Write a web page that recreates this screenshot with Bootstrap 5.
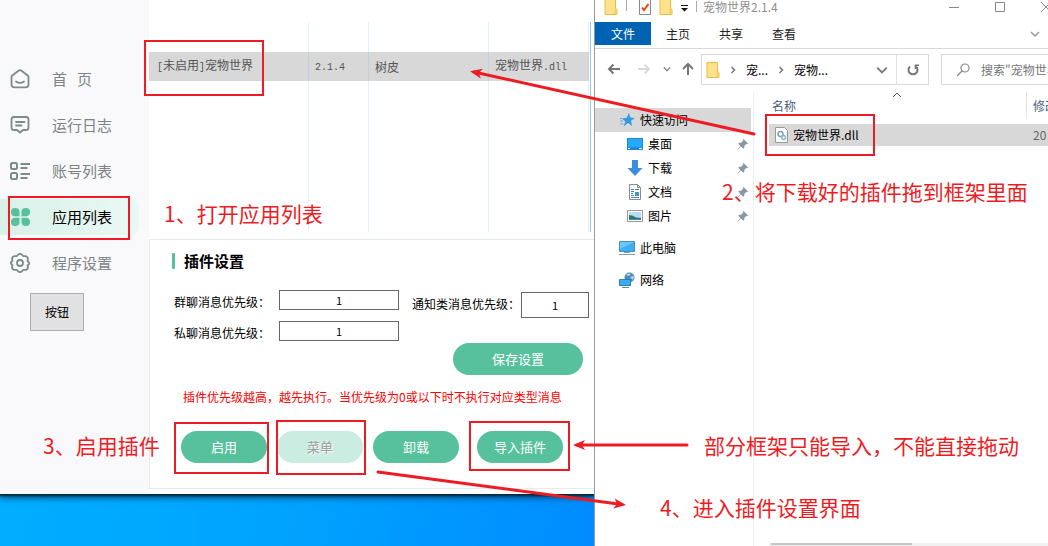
<!DOCTYPE html>
<html lang="zh-CN">
<head>
<meta charset="utf-8">
<meta name="viewport" content="width=device-width, initial-scale=1">
<title>插件安装步骤</title>
<link href="https://cdn.jsdelivr.net/npm/bootstrap@5.3.0/dist/css/bootstrap.min.css" rel="stylesheet">
<style>
:root{--mark:#ed1c24;--green:#57c19d;--edge:#d9d9d9}
body{font:12px/16px "Noto Sans CJK SC",sans-serif;color:#000;background:#fff}
svg{display:block;flex:none}
button,input{font:inherit;color:inherit}
.stage{min-height:100vh;overflow:hidden}
/* bot framework window */
.desk{flex:0 0 595px;overflow:hidden;border-right:1px solid #999;background:linear-gradient(100deg,#00b0ff,#00a5fe 50%,#008cff)}
.app{background:#fff;box-shadow:0 1px 2px 1px #002a3c,0 3px 7px #003a60}
.side{flex:0 0 149px;background:#f9f9fc;padding-top:61px;gap:10px}
.side a{height:36px;padding-left:9px;gap:21px;font-size:15px;color:#7c8481;text-decoration:none;width:139px;border-radius:0 8px 8px 0}
.side a.active{color:#000;background:linear-gradient(90deg,#d9f1e9,#eaf8f4)}
.side .plain{margin:2px 0 0 30px;width:54px;height:38px;background:#e1e1e1;border:1px solid #adadad}
.work{padding-top:22px}
.plugins{width:442px;table-layout:fixed;border-collapse:separate;border-spacing:0;padding-right:1px;font-size:12px;color:#555;border-right:1px solid #99c9f8}
.plugins td{border-right:1px solid #e3effd;padding:0 5px 0 6px;height:30px;white-space:nowrap}
.plugins .picked td{height:29px;background:#d8d8d8;border-color:#c5d0de}
.plugins .rest td{height:151px}
.plugins td:first-child{padding-left:8px}
.asc{font:10px/16px "Liberation Mono",monospace}
.panel{margin:7px 0 5px;border:1px solid #e6ebeb;border-right:0;height:250px;padding:13px 5px 0 22px}
.panel h2{font-size:15px;line-height:16px;font-weight:700;gap:9px}
.panel h2::before{content:"";width:3px;height:16px;border-radius:1px;background:var(--green)}
.fields{margin-top:21px;padding-left:2px}
.fields .rows{gap:11px}
.fields label{width:105px;padding-top:4px}
.fields input{width:120px;height:20px;border:1px solid #666;text-align:center;padding:0;background:#fff;font-size:11px}
.fields .wide{padding-top:2px}
.fields .wide label{width:109px}
.fields .wide input{width:68px;height:26px}
.pill{height:32px;width:86px;border:0;border-radius:16px;background:var(--green);color:#fff;font-size:13px;padding:0}
.pill.save{width:130px}
.pill:disabled{background:#cbece1;color:#9a9a9a;text-shadow:1px 1px #fff}
.warn{color:#f00;margin:14px 0 0 11px}
/* file explorer */
.explorer{min-width:0;overflow:hidden;white-space:nowrap}
.cap{height:22px;padding:0 0 8px 9px;color:#8f8f8f}
.cap .tools{margin-right:-6px;gap:30px}
.rib{height:27px;border-bottom:1px solid var(--edge);padding-bottom:3px;color:#222}
.rib button,.bar button{border:0;background:none;padding:0;flex:none}
.rib .file{width:56px;height:23px;background:#0063b1;color:#fff;margin-right:15px}
.rib .tab{margin-right:29px}
.bar{padding:5px 0 7px 4px}
.bar button{height:30px;display:flex;align-items:center;justify-content:center}
.addr{flex:0 0 228px;height:31px;border:1px solid var(--edge);margin-right:12px}
.addr .path{gap:9px;padding-left:4px}
.find{flex:1 1 0;min-width:0;overflow:hidden;height:31px;border:1px solid var(--edge);border-right:0;padding-left:14px;gap:9px}
.find input{border:0;outline:0;width:120px;padding:0;background:none;flex:none}
.find input::placeholder{color:#777;opacity:1}
.tree{flex:0 0 159px;border-right:1px solid #eee;padding-top:16px}
.tree a{height:24px;color:#000;text-decoration:none;padding-left:32px;gap:5px}
.tree a.root{padding-left:24px}
.tree a.on{background:#d8d8d8;margin-right:2px}
.tree .pin{margin-left:auto;margin-right:4px}
.files{padding-left:15px;position:relative;min-width:0}
.files table{width:400px;table-layout:fixed;border-collapse:separate;border-spacing:0}
.files th{font-weight:400;color:#4c607a;height:27px;padding:0 0 0 3px;border-right:1px solid #e2e2e2}
.files td{height:22px;padding:0 0 0 6px;background:#d8d8d8;color:#666}
.files .gap td{height:5px;background:none;padding:0}
.files .sort{position:absolute;left:138px;top:0}
.scroll{height:3px;background:#f0f0f0;padding-left:2px}
.scroll div{width:141px;height:2px;background:#c4c4c4}
/* hand-placed notes over both windows */
.notes{position:absolute;inset:0;pointer-events:none;overflow:hidden}
.notes p{position:absolute;margin:0;font-size:21px;line-height:28px;color:var(--mark);white-space:nowrap}
</style>
</head>
<body>
<svg width="0" height="0" class="position-absolute">
<defs>
<symbol id="pin" viewBox="0 0 12 12"><path d="M6.5 1 11 5.5 10 6.300 9.200 6 7.300 8 7.300 10 6.300 10.800 4 8.500 1 11.300.700 11 3.500 8 1.300 5.700 2.200 4.700 4.200 4.700 6.100 2.800 5.800 1.900Z" fill="#8a96a0"/></symbol>
<symbol id="folder" viewBox="0 0 14 16"><path d="M1 .500H11.500V9.500L13 10.500V15.500H1Z" fill="#ffe28a" stroke="#e3bd4a"/><path d="M10.500 15V10.500L13 9.500V15.500Z" fill="#f3cf62"/></symbol>
<symbol id="down" viewBox="0 0 10 10"><path d="M1 3 5 7 9 3" fill="none" stroke="currentColor" stroke-width="1.500"/></symbol>
<symbol id="next" viewBox="0 0 6 10"><path d="M1.500 2 4.500 5 1.500 8" fill="none" stroke="#777" stroke-width="1.500"/></symbol>
</defs></svg>
<div class="stage position-relative d-flex">
  <div class="desk">
    <div class="app d-flex">
      <nav class="side d-flex flex-column">
        <a href="#" class="d-flex align-items-center"><svg width="22" height="20" viewBox="0 0 22 20" fill="none" stroke="#7c8b87" stroke-width="1.800" stroke-linecap="round" stroke-linejoin="round"><path d="M2.500 8.200Q2.500 7.200 3.300 6.500L9.500 1.700Q11 .600 12.500 1.700L18.700 6.500Q19.500 7.200 19.500 8.200V15.500Q19.500 18.300 16.700 18.300H5.300Q2.500 18.300 2.500 15.500ZM7 12.500Q11 15.300 15 12.500"/></svg><span>首&nbsp;&nbsp; 页</span></a>
        <a href="#" class="d-flex align-items-center"><svg width="22" height="20" viewBox="0 0 22 20" fill="none" stroke="#7c8b87" stroke-width="1.800" stroke-linecap="round" stroke-linejoin="round"><path d="M5 2H17Q19.500 2 19.500 4.500V12.500Q19.500 15 17 15H14L11 17.500 8 15H5Q2.500 15 2.500 12.500V4.500Q2.500 2 5 2ZM7 7H15.500M7 10.500H12.500"/></svg>运行日志</a>
        <a href="#" class="d-flex align-items-center"><svg width="22" height="20" viewBox="0 0 22 20" fill="none" stroke="#7c8b87" stroke-width="2"><rect x="2" y="2" width="6" height="6" rx="1.500"/><rect x="2" y="12" width="6" height="6" rx="1.500"/><path d="M11.500 3H21M11.500 7H18.500M11.500 13H21M11.500 17H18.500"/></svg>账号列表</a>
        <a href="#" class="active d-flex align-items-center"><svg width="22" height="20" viewBox="0 0 22 20" fill="#57c19d"><path d="M10.500 9.300H6Q2 9 2 5 2 1 6 1 10.500 1 10.500 5ZM12.500 9.300H17Q21 9 21 5 21 1 17 1 12.500 1 12.500 5ZM10.500 10.800H6Q2 11 2 15 2 19 6 19 10.500 19 10.500 15ZM12.500 10.800H17Q21 11 21 15 21 19 17 19 12.500 19 12.500 15Z"/></svg>应用列表</a>
        <a href="#" class="d-flex align-items-center"><svg width="22" height="20" viewBox="0 0 22 20" fill="none" stroke="#7c8b87" stroke-width="1.800" stroke-linejoin="round"><path d="M9.300 1.500Q11 .300 12.700 1.500L14.300 3.200 16.800 3.200Q19 4 19 6.300L18.500 8 19.800 9.500Q20.500 10.500 19.800 11.300L18.500 12.500 19 14.500Q18.500 16.800 16.300 16.800L14.300 16.800 12.700 18.500Q11 19.700 9.300 18.500L7.700 16.800 5.200 16.800Q3 16.300 3 14L3.500 12.300 2.200 11Q1.500 10 2.200 9L3.500 7.700 3 5.800Q3.500 3.200 5.700 3.200L7.700 3.200Z"/><circle cx="11" cy="10" r="3"/></svg>程序设置</a>
        <button type="button" class="plain">按钮</button>
      </nav>
      <main class="work flex-grow-1">
        <table class="plugins">
          <colgroup><col style="width:160px"><col style="width:60px"><col style="width:120px"><col></colgroup>
          <tr><td></td><td></td><td></td><td></td></tr>
          <tr class="picked"><td><span class="asc">[</span>未启用<span class="asc">]</span>宠物世界</td><td><span class="asc">2.1.4</span></td><td>树皮</td><td>宠物世界<span class="asc">.dll</span></td></tr>
          <tr class="rest"><td></td><td></td><td></td><td></td></tr>
        </table>
        <section class="panel">
          <h2 class="d-flex m-0">插件设置</h2>
          <div class="fields d-flex">
            <div class="rows d-flex flex-column">
              <div class="d-flex align-items-start"><label for="g" style="height:20px">群聊消息优先级：</label><input id="g" value="1"></div>
              <div class="d-flex align-items-start"><label for="p" style="height:20px">私聊消息优先级：</label><input id="p" value="1"></div>
            </div>
            <div class="wide d-flex ms-auto align-items-start"><label for="n">通知类消息优先级：</label><input id="n" value="1"></div>
          </div>
          <div class="d-flex justify-content-end" style="padding:2px 6px 0 0"><button type="button" class="pill save">保存设置</button></div>
          <p class="warn">插件优先级越高，越先执行。当优先级为0或以下时不执行对应类型消息</p>
          <div class="d-flex" style="gap:10px;padding:26px 0 0 9px">
            <button type="button" class="pill">启用</button><button type="button" class="pill" disabled>菜单</button><button type="button" class="pill">卸载</button><button type="button" class="pill ms-2">导入插件</button>
          </div>
        </section>
      </main>
    </div>
  </div>

  <div class="explorer flex-grow-1 d-flex flex-column bg-white">
    <div class="cap d-flex align-items-center">
      <svg width="14" height="16"><use href="#folder"/></svg>
      <svg width="21" height="16" viewBox="0 0 21 16"><path d="M8.500 0V12" stroke="#aaa"/></svg>
      <svg width="12" height="16" viewBox="0 0 12 16"><path d="M.500.500H11.500V15.500H.500Z" fill="#fafafa" stroke="#888"/><path d="M3 8.500 5 11 9.500 5" fill="none" stroke="#e0491c" stroke-width="2"/></svg>
      <svg width="14" height="16" class="ms-2 me-2"><use href="#folder"/></svg>
      <svg width="22" height="16" viewBox="0 0 22 16"><path d="M0 6.500H7" stroke="#111"/><path d="M0 9H7L3.500 12.500Z" fill="#111"/><path d="M15.500 2V13" stroke="#aaa"/></svg>
      <span>宠物世界2.1.4</span>
      <div class="tools ms-auto d-flex">
        <svg width="16" height="12" viewBox="0 0 16 12"><path d="M3 6.500H13" stroke="#888"/></svg>
        <svg width="16" height="12" viewBox="0 0 16 12"><path d="M3.500 1.500H12.500V10.500H3.500Z" fill="none" stroke="#888"/></svg>
        <svg width="16" height="12" viewBox="0 0 16 12"><path d="M3 1 13 11M13 1 3 11" stroke="#888"/></svg>
      </div>
    </div>
    <div class="rib d-flex align-items-center">
      <button type="button" class="file">文件</button><button type="button" class="tab">主页</button><button type="button" class="tab">共享</button><button type="button" class="tab">查看</button>
      <svg width="10" height="10" class="ms-auto me-2" color="#999"><use href="#down"/></svg>
    </div>
    <div class="bar d-flex">
      <button type="button" aria-label="后退" style="width:30px"><svg width="14" height="14" viewBox="0 0 14 14" fill="none" stroke="#777" stroke-width="2"><path d="M13 7H2M6.500 2.500 2 7 6.500 11.500"/></svg></button>
      <button type="button" aria-label="前进" style="width:30px"><svg width="14" height="14" viewBox="0 0 14 14" fill="none" stroke="#d8d8d8" stroke-width="1.800"><path d="M1 7H12M7.500 2.500 12 7 7.500 11.500"/></svg></button>
      <button type="button" aria-label="历史" style="width:16px"><svg width="8" height="8" color="#777"><use href="#down"/></svg></button>
      <button type="button" aria-label="上移" style="width:26px"><svg width="14" height="14" viewBox="0 0 14 14" fill="none" stroke="#777" stroke-width="2"><path d="M7 13V2M2 7 7 2 12 7"/></svg></button>
      <div class="addr d-flex">
        <div class="path d-flex align-items-center flex-grow-1"><svg width="14" height="16"><use href="#folder"/></svg><svg width="8" height="10"><use href="#next"/></svg><span>宠...</span><svg width="8" height="10"><use href="#next"/></svg><span>宠物...</span><svg width="12" height="12" class="ms-auto me-2" color="#777"><use href="#down"/></svg></div>
        <button type="button" aria-label="刷新" class="border-start" style="width:32px"><svg width="14" height="14" viewBox="0 0 14 14" fill="none" stroke="#777" stroke-width="2"><path d="M4 3.500A4.500 4.500 0 1 0 10 3.500"/><path d="M13 2.200H9.500V6" stroke-width="1.600"/></svg></button>
      </div>
      <div class="find d-flex align-items-center"><svg width="16" height="16" viewBox="0 0 16 16" fill="none" stroke="#888" stroke-width="1.200"><circle cx="9" cy="6" r="4"/><path d="M6 9 1 14"/></svg><input aria-label="搜索" placeholder='搜索"宠物世界2.1.4"'></div>
    </div>
    <div class="d-flex flex-grow-1">
      <nav class="tree">
        <a href="#" class="root on d-flex align-items-center"><svg width="16" height="16" viewBox="-1 0 16 16"><path d="M9 1 10.300 5.500 15 6 11 8.700 12 14 8 11 3.500 14.500 5.300 9.500 2 6.500 6.500 6Z" fill="#3699e2"/><path d="M0 6.500H4M0 9H3M0 12H3.500" stroke="#5cb0ea"/></svg>快速访问</a>
        <a href="#" class="d-flex align-items-center"><svg width="16" height="16" viewBox="0 0 16 16"><path d="M0 2H16V14H0Z" fill="#1b8ae0"/><path d="M1 3H15V11H1Z" fill="#28a8f5"/><path d="M1 12.500H3M12 12.500H15" stroke="#fff"/></svg>桌面<svg class="pin" width="12" height="12"><use href="#pin"/></svg></a>
        <a href="#" class="d-flex align-items-center"><svg width="16" height="16" viewBox="0 0 16 16"><path d="M5 0H11V8H15.500L8 16 .500 8H5Z" fill="#3b8fde"/></svg>下载<svg class="pin" width="12" height="12"><use href="#pin"/></svg></a>
        <a href="#" class="d-flex align-items-center"><svg width="16" height="16" viewBox="0 0 16 16"><path d="M2.500.500H10.500L13.500 3.500V15.500H2.500Z" fill="#fff" stroke="#8c8c8c"/><path d="M10.500.500V3.500H13.500" fill="none" stroke="#8c8c8c"/><path d="M4 5.500H7M8 5.500H12M4 7.500H7M4 9.500H6M4 11.500H7M4 13.500H12" stroke="#3c8ab8"/><path d="M8 8H12V12H8Z" fill="#4b95bd"/></svg>文档<svg class="pin" width="12" height="12"><use href="#pin"/></svg></a>
        <a href="#" class="d-flex align-items-center"><svg width="16" height="16" viewBox="0 0 16 16"><path d="M.500 2.500H15.500V13.500H.500Z" fill="#fff" stroke="#999"/><path d="M2 4H14V12H2Z" fill="#b7dcf6"/><path d="M2 7Q6 7 9 9.500L14 10V12H2Z" fill="#37735e"/><path d="M2 11H14V12H2Z" fill="#3388ce"/></svg>图片<svg class="pin" width="12" height="12"><use href="#pin"/></svg></a>
        <a href="#" class="root mt-2 d-flex align-items-center"><svg width="16" height="16" viewBox="0 0 16 16"><path d="M.500 1.500H15.500V11.500H.500Z" fill="#3bb1f4" stroke="#4c8fae"/><path d="M1 2H15L1 9Z" fill="#69c8fa"/><path d="M5 12.500H11M0 14.500H16" stroke="#7ca0b2"/></svg>此电脑</a>
        <a href="#" class="root mt-2 d-flex align-items-center"><svg width="16" height="16" viewBox="0 0 16 16"><circle cx="10.500" cy="5.500" r="5" fill="#4b8cb4"/><path d="M7 3Q9 .500 12 2L10 4ZM11 5 15 4 14 8Z" fill="#b7dcea"/><path d="M.500 7.500H11.500V13.500H.500Z" fill="#37aef4" stroke="#337ea7"/><path d="M3 15.500H10" stroke="#5d8ca8"/></svg>网络</a>
      </nav>
      <div class="files flex-grow-1 d-flex flex-column">
        <svg class="sort" width="10" height="6" viewBox="0 0 10 6"><path d="M1 5 5 1 9 5" fill="none" stroke="#555"/></svg>
        <table>
          <colgroup><col style="width:258px"><col></colgroup>
          <thead><tr><th>名称</th><th style="padding-left:6px">修改日期</th></tr></thead>
          <tbody><tr class="gap"><td></td><td></td></tr>
          <tr><td><div class="d-flex align-items-center text-black" style="gap:5px"><svg width="13" height="16" viewBox="0 0 13 16"><path d="M.500.500H9.500L12.500 3.500V15.500H.500Z" fill="#fff" stroke="#999"/><circle cx="5.500" cy="7" r="2.500" fill="none" stroke="#82a1b5" stroke-width="1.500"/><circle cx="8.500" cy="10.500" r="2" fill="none" stroke="#82b7d9" stroke-width="1.500"/></svg>宠物世界.dll</div></td><td>20</td></tr></tbody>
        </table>
        <div class="scroll mt-auto"><div></div></div>
      </div>
    </div>
  </div>

  <div class="notes">
    <svg width="1048" height="546" fill="none" stroke="#ed1c24">
      <defs><marker id="tip" markerUnits="userSpaceOnUse" markerWidth="14" markerHeight="12" refX="9" refY="6" orient="auto"><path d="M13 6 1 1 4 6 1 11Z" fill="#ed1c24" stroke="none"/></marker></defs>
      <g stroke-width="2"><rect x="145" y="41" width="118" height="54"/><rect x="9" y="197" width="120" height="42"/><rect x="766" y="115" width="108" height="40"/><rect x="175" y="423" width="93" height="50"/><rect x="277" y="421" width="88" height="53"/><rect x="470" y="422" width="99" height="48"/></g>
      <g stroke-width="3" stroke-linecap="round"><path d="M754 134 474 72" marker-end="url(#tip)"/><path d="M687 445H577" marker-end="url(#tip)"/><path d="M378 472 622 504.500" marker-end="url(#tip)"/></g>
    </svg>
    <p style="left:164px;top:199px">1、打开应用列表</p>
    <p style="left:722px;top:177px">2、将下载好的插件拖到框架里面</p>
    <p style="left:43px;top:431px">3、启用插件</p>
    <p style="left:704px;top:431px">部分框架只能导入，不能直接拖动</p>
    <p style="left:660px;top:493px">4、进入插件设置界面</p>
  </div>
</div>
<script src="https://cdn.jsdelivr.net/npm/bootstrap@5.3.0/dist/js/bootstrap.bundle.min.js"></script>
</body>
</html>
